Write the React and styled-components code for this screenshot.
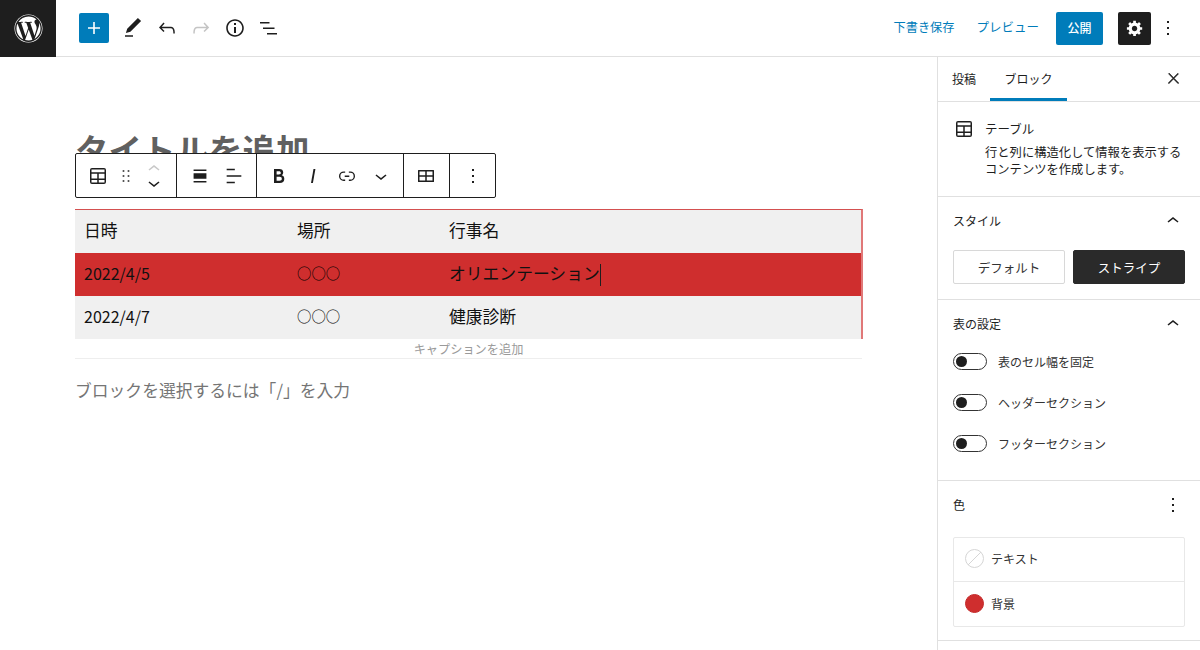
import React from "react";
import styled, { createGlobalStyle } from "styled-components";
import { FaWordpress } from "react-icons/fa";

const Global = createGlobalStyle`
  html, body { margin: 0; padding: 0; background: #fff; }
  body { font-family: "Noto Sans CJK JP", "Noto Sans", sans-serif; color: #1e1e1e; overflow: hidden; }
  * { box-sizing: border-box; }
`;

const Page = styled.div`width: 1200px; height: 650px; overflow: hidden; display: flex; flex-direction: column;`;
const Header = styled.header`height: 57px; flex: none; border-bottom: 1px solid #e0e0e0; display: flex; align-items: center; padding-right: 20px;`;
const Logo = styled.div`width: 56px; height: 57px; margin-bottom: -1px; background: #1e1e1e; color: #fff; display: flex; align-items: center; justify-content: center; font-size: 29px; flex: none;`;
const LeftTools = styled.div`display: flex; align-items: center; margin-left: 23px; flex: 1;`;
const AddButton = styled.div`width: 30px; height: 30px; background: #007cba; border-radius: 2px; color: #fff; display: flex; align-items: center; justify-content: center; margin-right: 7px;`;
const ToolSlot = styled.div`width: 34px; height: 34px; display: flex; align-items: center; justify-content: center; color: ${p => p.$muted ? "#c4c4c4" : "#1e1e1e"}; flex: none;`;
const RightTools = styled.div`display: flex; align-items: center;`;
const LinkButton = styled.span`font-size: ${p => p.$size}px; color: #007cba; margin-right: ${p => p.$gap}px; white-space: nowrap; line-height: 1; padding-bottom: 2px;`;
const Publish = styled.div`width: 47px; height: 33px; border-radius: 2px; background: #007cba; color: #fff; font-size: 12px; font-weight: 500; display: flex; align-items: center; justify-content: center; margin-right: 15px; padding-bottom: 2px;`;
const GearButton = styled.div`width: 33px; height: 33px; border-radius: 2px; background: #1e1e1e; color: #fff; display: flex; align-items: center; justify-content: center;`;
const MoreSlot = styled.div`width: 24px; margin-left: 5px; display: flex; justify-content: center; color: #1e1e1e;`;

const Body = styled.div`flex: 1; display: flex; min-height: 0;`;
const Editor = styled.main`flex: 1; padding: 70px 75px 0 75px; min-width: 0;`;
const Title = styled.h1`margin: 0 0 38px; font-size: 33.5px; line-height: 44px; font-weight: 700; color: #606060; white-space: nowrap; letter-spacing: 0;`;
const TableBlock = styled.div`position: relative; width: 787px;`;
const Toolbar = styled.div`position: absolute; left: 0; top: -56px; height: 45px; display: flex; background: #fff; border: 1px solid #1e1e1e; border-radius: 2px;`;
const ToolGroup = styled.div`width: ${p => p.$w}px; display: flex; align-items: center; padding-left: ${p => p.$pad || 0}px; padding-right: ${p => p.$padR || 0}px; justify-content: ${p => p.$center ? "center" : "flex-start"}; border-right: ${p => p.$last ? "none" : "1px solid #1e1e1e"}; flex: none;`;
const TbSlot = styled.div`width: ${p => p.$w || 34}px; display: flex; align-items: center; justify-content: center; flex: none;`;
const Mover = styled.div`width: 24px; display: flex; flex-direction: column; align-items: center; margin-left: 5px;`;
const MoverIcon = styled.svg`display: block; margin: -5px 0; fill: ${p => p.$muted ? "#c8c8c8" : "#1e1e1e"};`;
const TableFrame = styled.div`border-top: 1px solid #d45050; border-right: 2px solid #e07878; margin-right: -1px;`;
const Row = styled.div`display: grid; grid-template-columns: 213px 152px 1fr; height: 43px; background: ${p => p.$red ? "#cf2e2e" : "#f0f0f0"}; align-items: center; color: #111; font-size: 16.8px;`;
const Cell = styled.div`padding: 0 9px 4px; white-space: nowrap; line-height: 24px; display: flex; align-items: center;`;
const DateText = styled.span`font-size: 16px;`;
const Circles = styled.span`font-size: 14.4px; color: #000;`;
const Caret = styled.span`display: inline-block; width: 1px; height: 22px; background: #1e1e1e; margin-top: 4px;`;
const Caption = styled.div`height: 20px; border-bottom: 1px solid #eeeeee; font-size: 12.2px; color: #9a9a9a; text-align: center; line-height: 21px;`;
const Placeholder = styled.p`margin: 18px 0 0; font-size: 16.8px; line-height: 26px; color: #757575;`;

const Sidebar = styled.aside`width: 263px; flex: none; border-left: 1px solid #e0e0e0; display: flex; flex-direction: column;`;
const Tabs = styled.div`height: 45px; flex: none; border-bottom: 1px solid #e0e0e0; display: flex; align-items: stretch; padding-left: 7px; position: relative;`;
const Tab = styled.div`font-size: 12px; display: flex; align-items: center; justify-content: center; width: ${p => p.$w}px; margin-right: ${p => p.$mr || 0}px; color: #1e1e1e; padding-bottom: 2px; ${p => p.$active && "box-shadow: inset 0 -3px 0 #007cba;"}`;
const CloseSlot = styled.div`margin-left: auto; width: 24px; margin-right: 15px; display: flex; align-items: center; justify-content: center; padding-bottom: 1px; & svg { stroke: currentColor; stroke-width: 0.7px; }`;
const BlockCard = styled.div`height: 95px; flex: none; border-bottom: 1px solid #e0e0e0; display: flex; padding: 15px 15px 0 14px;`;
const BlockIconSlot = styled.div`width: 24px; height: 24px; margin-right: 9px; flex: none;`;
const BlockText = styled.div`display: flex; flex-direction: column;`;
const BlockName = styled.div`font-size: 12.5px; line-height: 24px; margin-bottom: 3px;`;
const BlockDesc = styled.div`font-size: 12.3px; line-height: 17px; color: #1e1e1e; white-space: nowrap;`;
const Panel = styled.section`flex: none; height: ${p => p.$h}px; border-bottom: 1px solid #e0e0e0; padding: 0 15px;`;
const PanelHead = styled.div`height: 47px; display: flex; align-items: center; justify-content: space-between; font-size: 12px;`;
const PanelIcon = styled.div`width: 24px; height: 24px; display: flex; align-items: center; justify-content: center;`;
const StyleRow = styled.div`display: flex; gap: 8px; margin-top: 6px;`;
const StyleBtn = styled.div`width: 112px; height: 34px; border-radius: 2px; font-size: 12.5px; display: flex; align-items: center; justify-content: center; background: ${p => p.$on ? "#2a2a2a" : "#fff"}; color: ${p => p.$on ? "#fff" : "#333"}; border: 1px solid ${p => p.$on ? "#2a2a2a" : "#d8d8d8"};`;
const ToggleList = styled.div`display: flex; flex-direction: column; gap: 24px; margin-top: 6px;`;
const ToggleRow = styled.div`display: flex; align-items: center; height: 17px; font-size: 12px; color: #333;`;
const Track = styled.div`width: 34px; height: 17px; border: 1px solid #333; border-radius: 9px; padding: 2px; margin-right: 11px; flex: none;`;
const Knob = styled.div`width: 11px; height: 11px; border-radius: 50%; background: #1e1e1e;`;
const ColorBox = styled.div`border: 1px solid #e8e8e8; border-radius: 2px; margin-top: 9px;`;
const ColorRow = styled.div`height: 44px; display: flex; align-items: center; padding: 0 0 2px 11px; font-size: 12px; color: #333; border-bottom: ${p => p.$sep ? "1px solid #e8e8e8" : "none"};`;
const Swatch = styled.div`width: 19px; height: 19px; border-radius: 50%; margin-right: 7px; flex: none; border: 1px solid ${p => p.$color ? "#c42a2a" : "#d6d6d6"}; background: ${p => p.$color ? p.$color : "linear-gradient(-45deg, transparent 48%, #d6d6d6 48%, #d6d6d6 52%, transparent 52%)"};`;

const Ico = ({ d, size = 24, vb = "0 0 24 24", rule }) => (
  <svg width={size} height={size} viewBox={vb} fill="currentColor" aria-hidden="true"><path d={d} fillRule={rule} /></svg>
);
const P = {
  plus: "M18 11.2h-5.2V6h-1.6v5.2H6v1.6h5.2V18h1.6v-5.2H18z",
  edit: "M20.1 5.1L16.9 2 6.2 12.7l-1.3 4.4 4.5-1.3L20.1 5.1zM4 20.8h8v-1.5H4v1.5z",
  undo: "M18.3 11.7c-.6-.6-1.4-.9-2.3-.9H6.7l2.9-3.3-1.1-1-4.5 5L8.5 16l1-1-2.7-2.7H16c.5 0 .9.2 1.3.5 1 1 1 3.4 1 4.5v.3h1.5v-.2c0-1.5 0-4.3-1.5-5.7z",
  redo: "M15.6 6.5l-1.1 1 2.9 3.3H8c-.9 0-1.7.3-2.3.9-1.4 1.5-1.4 4.2-1.4 5.6v.2h1.5v-.3c0-1.1 0-3.5 1-4.5.3-.3.7-.5 1.3-.5h9.2L14.5 15l1.1 1.1 4.6-4.6-4.6-5z",
  info: "M12 3.2c-4.8 0-8.8 3.9-8.8 8.8 0 4.8 3.9 8.8 8.8 8.8 4.8 0 8.8-3.9 8.8-8.8 0-4.8-4-8.8-8.8-8.8zm0 16c-4 0-7.2-3.3-7.2-7.2C4.8 8 8 4.8 12 4.8s7.2 3.3 7.2 7.2c0 4-3.2 7.2-7.2 7.2zM11 17h2v-6h-2v6zm0-8h2V7h-2v2z",
  list: "M3 6h9.5v1.6H3zM6 11.4h11.5V13H6zM10 17h10v1.6H10z",
  table: "M6 4h12a2 2 0 0 1 2 2v12a2 2 0 0 1-2 2H6a2 2 0 0 1-2-2V6a2 2 0 0 1 2-2zM5.5 5.5v2.7h13V5.5zM5.5 9.7v4.9h5.75V9.7zM12.75 9.7v4.9h5.75V9.7zM5.5 16.1v2.4h5.75v-2.4zM12.75 16.1v2.4h5.75v-2.4z",
  drag: "M8 7h2V5H8v2zm0 6h2v-2H8v2zm0 6h2v-2H8v2zm6-14v2h2V5h-2zm0 8h2v-2h-2v2zm0 6h2v-2h-2v2z",
  up: "M6.5 12.4L12 8l5.5 4.4-.9 1.2L12 10l-4.5 3.6-1-1.2z",
  down: "M17.5 11.6L12 16l-5.5-4.4.9-1.2L12 14l4.5-3.6 1 1.2z",
  wide: "M5 5h14v1.5H5zM5 9h14v6H5zM5 17.5h14V19H5z",
  left: "M4 19.8h8.9v-1.5H4v1.5zm8.9-15.6H4v1.5h8.9V4.2zm-8.9 7v1.5h16v-1.5H4z",
  bold: "M14.7 11.3c1-.6 1.5-1.6 1.5-3 0-2.3-1.3-3.4-4-3.4H7v14h5.8c1.4 0 2.5-.3 3.3-1 .8-.7 1.2-1.7 1.2-2.9.1-1.9-.8-3.1-2.6-3.7zm-5.1-4h2.3c.6 0 1.1.1 1.4.4.3.3.5.7.5 1.2s-.2 1-.5 1.2c-.3.3-.8.4-1.4.4H9.6V7.3zm4.6 9c-.4.3-1 .4-1.7.4H9.6v-3.9h2.9c.7 0 1.3.2 1.7.5.4.3.6.8.6 1.5s-.2 1.2-.6 1.5z",
  italic: "M12.5 5L10 19h1.9l2.5-14z",
  link: "M10 17.389H8.444A5.194 5.194 0 1 1 8.444 7H10v1.5H8.444a3.694 3.694 0 0 0 0 7.389H10v1.5ZM14 7h1.556a5.194 5.194 0 0 1 0 10.39H14v-1.5h1.556a3.694 3.694 0 0 0 0-7.39H14V7Zm-4.5 6h5v-1.5h-5V13Z",
  grid: "M4.5 6h15a.5.5 0 0 1 .5.5v11a.5.5 0 0 1-.5.5h-15a.5.5 0 0 1-.5-.5v-11a.5.5 0 0 1 .5-.5zM5.5 7.5v3.75h5.75V7.5zM12.75 7.5v3.75h5.75V7.5zM5.5 12.75v3.75h5.75v-3.75zM12.75 12.75v3.75h5.75v-3.75z",
  dots: "M13 19h-2v-2h2v2zm0-6h-2v-2h2v2zm0-6h-2V5h2v2z",
  close: "M13 11.8l6.1-6.3-1-1-6.1 6.2-6.1-6.3-1 1 6.1 6.3-6.5 6.7 1 1 6.5-6.6 6.5 6.6 1-1z",
  gear: "M18 12h-2.18c-.17.7-.44 1.35-.81 1.93l1.54 1.54-2.1 2.1-1.54-1.54c-.58.36-1.23.63-1.91.79V19H8v-2.18c-.68-.16-1.33-.43-1.91-.79l-1.54 1.54-2.12-2.12 1.54-1.54c-.36-.58-.63-1.23-.79-1.91H1V9.03h2.17c.16-.7.44-1.35.8-1.94L2.43 5.55l2.1-2.1 1.54 1.54c.58-.37 1.24-.64 1.93-.81V2h3v2.18c.68.16 1.33.43 1.91.79l1.54-1.54 2.12 2.12-1.54 1.54c.36.59.64 1.24.8 1.94H18V12zm-8.5 1.5c1.66 0 3-1.34 3-3s-1.34-3-3-3-3 1.34-3 3 1.34 3 3 3z",
  chevUp: "M6.5 12.4L12 8l5.5 4.4-.9 1.2L12 10l-4.5 3.6-1-1.2z",
  chevDown: "M17.5 11.6L12 16l-5.5-4.4.9-1.2L12 14l4.5-3.6 1 1.2z",
};

const Toggle = ({ label }) => (
  <ToggleRow><Track><Knob /></Track>{label}</ToggleRow>
);

export default function App() {
  return (
    <Page>
      <Global />
      <Header>
        <Logo><FaWordpress /></Logo>
        <LeftTools>
          <AddButton><Ico d={P.plus} /></AddButton>
          <ToolSlot><Ico d={P.edit} /></ToolSlot>
          <ToolSlot><Ico d={P.undo} /></ToolSlot>
          <ToolSlot $muted><Ico d={P.redo} /></ToolSlot>
          <ToolSlot><Ico d={P.info} /></ToolSlot>
          <ToolSlot><Ico d={P.list} /></ToolSlot>
        </LeftTools>
        <RightTools>
          <LinkButton $size={12.2} $gap={22}>下書き保存</LinkButton>
          <LinkButton $size={12.5} $gap={17}>プレビュー</LinkButton>
          <Publish>公開</Publish>
          <GearButton><Ico d={P.gear} size={18} vb="0 0 20 20" /></GearButton>
          <MoreSlot><Ico d={P.dots} /></MoreSlot>
        </RightTools>
      </Header>
      <Body>
        <Editor>
          <Title>タイトルを追加</Title>
          <TableBlock>
            <Toolbar>
              <ToolGroup $w={101} $pad={5}>
                <TbSlot><Ico d={P.table} rule="evenodd" /></TbSlot>
                <TbSlot $w={22}><Ico d={P.drag} size={20} /></TbSlot>
                <Mover>
                  <MoverIcon width="24" height="24" viewBox="0 0 24 24" $muted><path d={P.up} /></MoverIcon>
                  <MoverIcon width="24" height="24" viewBox="0 0 24 24"><path d={P.down} /></MoverIcon>
                </Mover>
              </ToolGroup>
              <ToolGroup $w={80} $pad={6}>
                <TbSlot><Ico d={P.wide} size={22} /></TbSlot>
                <TbSlot><Ico d={P.left} size={22} /></TbSlot>
              </ToolGroup>
              <ToolGroup $w={147} $pad={5}>
                <TbSlot><Ico d={P.bold} /></TbSlot>
                <TbSlot><Ico d={P.italic} /></TbSlot>
                <TbSlot><Ico d={P.link} size={22} /></TbSlot>
                <TbSlot><Ico d={P.chevDown} /></TbSlot>
              </ToolGroup>
              <ToolGroup $w={46} $center $padR={1}><Ico d={P.grid} rule="evenodd" /></ToolGroup>
              <ToolGroup $w={45} $center $last><Ico d={P.dots} /></ToolGroup>
            </Toolbar>
            <TableFrame>
              <Row><Cell>日時</Cell><Cell>場所</Cell><Cell>行事名</Cell></Row>
              <Row $red><Cell><DateText>2022/4/5</DateText></Cell><Cell><Circles>○○○</Circles></Cell><Cell>オリエンテーション<Caret /></Cell></Row>
              <Row><Cell><DateText>2022/4/7</DateText></Cell><Cell><Circles>○○○</Circles></Cell><Cell>健康診断</Cell></Row>
            </TableFrame>
            <Caption>キャプションを追加</Caption>
          </TableBlock>
          <Placeholder>ブロックを選択するには「/」を入力</Placeholder>
        </Editor>
        <Sidebar>
          <Tabs>
            <Tab $w={38} $mr={7}>投稿</Tab>
            <Tab $w={77} $active>ブロック</Tab>
            <CloseSlot><Ico d={P.close} size={17} /></CloseSlot>
          </Tabs>
          <BlockCard>
            <BlockIconSlot><Ico d={P.table} rule="evenodd" /></BlockIconSlot>
            <BlockText>
              <BlockName>テーブル</BlockName>
              <BlockDesc>行と列に構造化して情報を表示する<br />コンテンツを作成します。</BlockDesc>
            </BlockText>
          </BlockCard>
          <Panel $h={103}>
            <PanelHead>スタイル<PanelIcon><Ico d={P.chevUp} /></PanelIcon></PanelHead>
            <StyleRow>
              <StyleBtn>デフォルト</StyleBtn>
              <StyleBtn $on>ストライプ</StyleBtn>
            </StyleRow>
          </Panel>
          <Panel $h={181}>
            <PanelHead>表の設定<PanelIcon><Ico d={P.chevUp} /></PanelIcon></PanelHead>
            <ToggleList>
              <Toggle label="表のセル幅を固定" />
              <Toggle label="ヘッダーセクション" />
              <Toggle label="フッターセクション" />
            </ToggleList>
          </Panel>
          <Panel $h={160}>
            <PanelHead>色<PanelIcon><Ico d={P.dots} /></PanelIcon></PanelHead>
            <ColorBox>
              <ColorRow $sep><Swatch />テキスト</ColorRow>
              <ColorRow><Swatch $color="#cf2e2e" />背景</ColorRow>
            </ColorBox>
          </Panel>
        </Sidebar>
      </Body>
    </Page>
  );
}
